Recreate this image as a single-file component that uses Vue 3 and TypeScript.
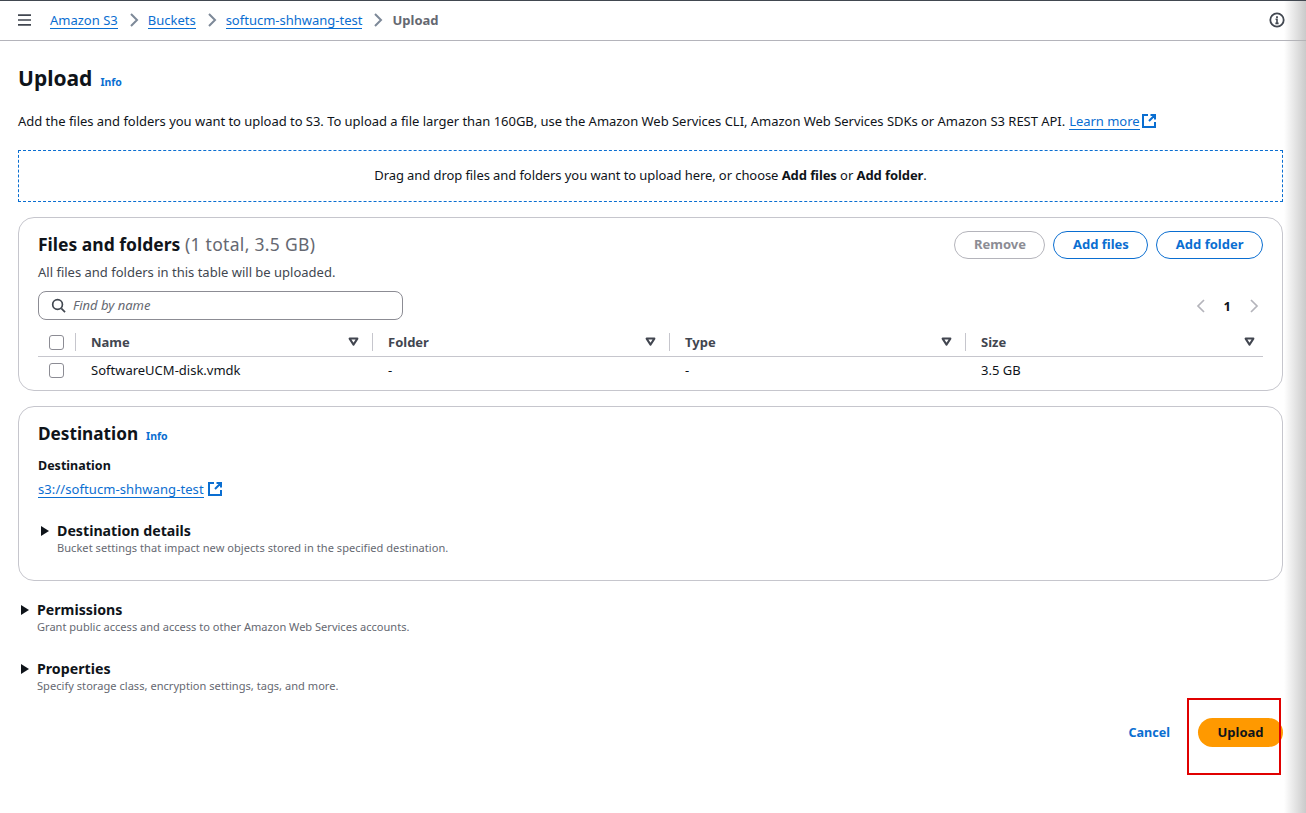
<script setup lang="ts">
interface Col { name: string; value: string }
const cols: Col[] = [
  { name: 'Name', value: 'SoftwareUCM-disk.vmdk' },
  { name: 'Folder', value: '-' },
  { name: 'Type', value: '-' },
  { name: 'Size', value: '3.5 GB' },
]
const crumbs = ['Amazon S3', 'Buckets', 'softucm-shhwang-test']
</script>

<template>
  <div class="page">
    <header class="topbar">
      <svg class="menu" width="15" height="16" viewBox="0 0 15 16"><path d="M1 3.2h13M1 8h13M1 12.8h13" stroke="#414750" stroke-width="1.7" fill="none" /></svg>
      <nav class="crumbs">
        <template v-for="c in crumbs" :key="c">
          <a class="crumb">{{ c }}</a>
          <svg class="sep" width="16" height="16" viewBox="0 0 16 16"><path d="M5 2l6 6-6 6" stroke="#7d8998" stroke-width="2" fill="none" /></svg>
        </template>
        <span class="current">Upload</span>
      </nav>
      <svg class="info-icon" width="16" height="16" viewBox="0 0 16 16"><circle cx="8" cy="8" r="6.7" stroke="#414750" stroke-width="1.8" fill="none" /><path d="M6.6 7.2H8v4.2M6.4 11.4h3.2" stroke="#414750" stroke-width="1.6" fill="none" /><path d="M8 4.2v1.8" stroke="#414750" stroke-width="1.8" /></svg>
    </header>

    <main class="main">
      <div class="title-row">
        <h1>Upload</h1><a class="info">Info</a>
      </div>
      <p class="desc">Add the files and folders you want to upload to S3. To upload a file larger than 160GB, use the Amazon Web Services CLI, Amazon Web Services SDKs or Amazon S3 REST API. <a class="link">Learn more</a>
        <svg class="ext" width="16" height="16" viewBox="0 0 16 16"><path d="M7 2H2v12h12V9M9.5 2H14v4.5M14 2L8 8" stroke="#0a6ed1" stroke-width="2" fill="none" /></svg>
      </p>

      <div class="drop"><span>Drag and drop files and folders you want to upload here, or choose <b>Add files</b> or <b>Add folder</b>.</span></div>

      <section class="card files">
        <div class="card-head">
          <div>
            <h2>Files and folders <span class="count">(1 total, 3.5 GB)</span></h2>
            <p class="sub">All files and folders in this table will be uploaded.</p>
          </div>
          <div class="btns">
            <button class="btn disabled">Remove</button>
            <button class="btn">Add files</button>
            <button class="btn">Add folder</button>
          </div>
        </div>
        <div class="tools">
          <div class="search">
            <svg width="15" height="15" viewBox="0 0 16 16"><circle cx="7" cy="7" r="5.2" stroke="#414750" stroke-width="1.8" fill="none" /><path d="M11 11l4 4" stroke="#414750" stroke-width="1.8" /></svg>
            <span>Find by name</span>
          </div>
          <div class="pager">
            <svg width="12" height="14" viewBox="0 0 12 14"><path d="M9 1L3 7l6 6" stroke="#b4b4bb" stroke-width="1.7" fill="none" /></svg>
            <b>1</b>
            <svg width="12" height="14" viewBox="0 0 12 14"><path d="M3 1l6 6-6 6" stroke="#b4b4bb" stroke-width="1.7" fill="none" /></svg>
          </div>
        </div>
        <div class="table">
          <div class="row head">
            <div class="check-cell"><i class="check"></i></div>
            <div v-for="c in cols" :key="c.name" class="th">
              <span>{{ c.name }}</span>
              <svg width="11" height="10" viewBox="0 0 11 10"><path d="M1.6 1.6h7.8L5.5 7.6z" stroke="#424650" stroke-width="2" fill="none" stroke-linejoin="round" /></svg>
            </div>
          </div>
          <div class="row body">
            <div class="check-cell"><i class="check"></i></div>
            <div v-for="c in cols" :key="c.name" class="td">{{ c.value }}</div>
          </div>
        </div>
      </section>

      <section class="card dest">
        <div class="dest-title"><h2>Destination</h2><a class="info">Info</a></div>
        <div class="label">Destination</div>
        <div class="dest-link"><a class="link">s3://softucm-shhwang-test</a>
          <svg class="ext" width="16" height="16" viewBox="0 0 16 16"><path d="M7 2H2v12h12V9M9.5 2H14v4.5M14 2L8 8" stroke="#0a6ed1" stroke-width="2" fill="none" /></svg>
        </div>
        <div class="expander inner">
          <i class="tri"></i>
          <div>
            <h3>Destination details</h3>
            <p>Bucket settings that impact new objects stored in the specified destination.</p>
          </div>
        </div>
      </section>

      <div class="expander perm">
        <i class="tri"></i>
        <div>
          <h3>Permissions</h3>
          <p>Grant public access and access to other Amazon Web Services accounts.</p>
        </div>
      </div>
      <div class="expander prop">
        <i class="tri"></i>
        <div>
          <h3>Properties</h3>
          <p>Specify storage class, encryption settings, tags, and more.</p>
        </div>
      </div>

      <div class="actions">
        <a class="cancel">Cancel</a>
        <button class="primary">Upload</button>
      </div>
    </main>

    <div class="edge"></div>
    <div class="redbox"></div>
  </div>
</template>

<style>
html, body { margin: 0; background: #fff; }
</style>

<style scoped>
.page {
  position: relative;
  width: 1306px;
  height: 813px;
  overflow: hidden;
  background: #fff;
  color: #0f141a;
  font-family: "Noto Sans", "Open Sans", sans-serif;
  font-size: 13px;
  box-sizing: border-box;
  border-top: 1px solid #414750;
}
h1, h2, h3, p { margin: 0; }
a { cursor: pointer; }
.topbar {
  box-sizing: content-box;
  border-bottom: 1px solid #b4b4bb;
  display: flex;
  align-items: center;
  padding: 0 21px 1px 17px;
  height: 38px;
}
.menu { flex: none; }
.crumbs { display: flex; align-items: center; margin-left: 18px; flex: 1; }
.crumb { color: #0a6ed1; border-bottom: 1px solid #0a6ed1; line-height: 16px; }
.sep { margin: 0 6px 0 8px; }
.current { color: #656871; font-weight: 700; }
.main { padding: 0 23px 0 18px; }
.title-row { display: flex; align-items: baseline; margin-top: 21px; height: 32px; }
h1 { font-size: 21px; line-height: 32px; font-weight: 700; }
.info { color: #0a6ed1; font-size: 10.5px; font-weight: 700; margin-left: 8px; }
.desc { margin-top: 17px; line-height: 20px; display: flex; align-items: center; gap: 1px; white-space: nowrap; height: 20px; letter-spacing: -0.03px; }
.desc .link { margin-left: 3px; }
.link { color: #0a6ed1; border-bottom: 1px solid #0a6ed1; line-height: 16px; }
.ext { flex: none; }
.drop {
  margin-top: 19px;
  height: 52px;
  box-sizing: border-box;
  border: 1px dashed #0a6ed1;
  display: flex;
  align-items: center;
  justify-content: center;
  padding-bottom: 2px;
  letter-spacing: -0.08px;
}
.card {
  border: 1px solid #c6c6cd;
  border-radius: 16px;
  box-sizing: border-box;
  padding: 0 19px;
}
.files { margin-top: 15px; height: 174px; }
.card-head { display: flex; justify-content: space-between; padding-top: 13px; height: 47px; box-sizing: content-box; }
h2 { font-size: 17.5px; line-height: 27px; font-weight: 700; }
.dest h2 { font-size: 17.2px; line-height: 28px; }
.count { font-weight: 400; color: #656871; letter-spacing: 0.3px; }
.sub { color: #414750; line-height: 18px; margin-top: 5px; }
.btns { display: flex; gap: 8px; align-items: flex-start; }
.btn {
  height: 28px;
  padding: 0 18.5px 2px;
  background: #fff;
  border: 1px solid #0a6ed1;
  border-radius: 14px;
  color: #0a6ed1;
  font: 700 13px "Noto Sans", sans-serif;
}
.btn.disabled { border-color: #b4b4bb; color: #8c8c94; }
.tools { display: flex; justify-content: space-between; align-items: center; margin-top: 13px; }
.search {
  width: 365px;
  height: 29px;
  box-sizing: border-box;
  border: 1px solid #8c8c94;
  border-radius: 8px;
  display: flex;
  align-items: center;
  gap: 7px;
  padding: 0 0 2px 12px;
  color: #656871;
  font-style: italic;
}
.search svg { position: relative; top: 1px; }
.pager { display: flex; align-items: center; gap: 17px; padding-right: 3px; }
.table { margin-top: 4px; }
.row { display: grid; grid-template-columns: 38px 297px 297px 296px 297px; }
.row.head { height: 28px; padding-top: 4px; border-bottom: 1px solid #c6c6cd; align-items: center; }
.row.body { height: 26px; padding-bottom: 1px; align-items: center; }
.check-cell { display: flex; align-items: center; height: 18px; padding-left: 11px; border-right: 1px solid #c6c6cd; box-sizing: border-box; }
.row.body .check-cell { border-right: none; }
.check { display: block; width: 13px; height: 13px; border: 1px solid #8c8c94; border-radius: 3px; box-sizing: content-box; }
.th {
  display: flex;
  justify-content: space-between;
  align-items: center;
  height: 18px;
  padding: 0 13px 0 15px;
  box-sizing: border-box;
  border-right: 1px solid #c6c6cd;
  font-weight: 700;
  color: #424650;
}
.th:last-child { border-right: none; padding-right: 8px; }
.td { padding-left: 15px; color: #0f141a; }
.dest { margin-top: 15px; height: 175px; padding-top: 13px; }
.dest-title { display: flex; align-items: baseline; }
.dest-title .info { margin-left: 8px; }
.label { font-weight: 700; margin-top: 9px; line-height: 18px; font-size: 12.5px; }
.dest-link { display: flex; align-items: center; gap: 3px; margin-top: 4px; height: 20px; }
.dest-link .link { letter-spacing: 0.08px; }
.expander { display: flex; align-items: flex-start; }
.expander h3 { font-size: 14.2px; line-height: 18px; font-weight: 700; }
.expander p { font-size: 11.05px; line-height: 16px; color: #656871; }
.inner p { letter-spacing: 0.04px; }
.prop p { letter-spacing: 0.03px; }
.tri { display: block; width: 0; height: 0; border-left: 8px solid #0f141a; border-top: 5px solid transparent; border-bottom: 5px solid transparent; margin-top: 4px; margin-right: 8px; }
.inner { margin-top: 23px; padding-left: 3px; }
.perm { margin-top: 20px; padding-left: 3px; }
.prop { margin-top: 25px; padding-left: 3px; }
.actions { display: flex; justify-content: flex-end; align-items: center; gap: 28px; margin-top: 24px; }
.cancel { color: #0a6ed1; font-weight: 700; font-size: 12.6px; }
.primary {
  width: 85px;
  height: 29px;
  padding: 0 0 2px;
  border: none;
  border-radius: 15px;
  background: #ff9900;
  color: #0f141a;
  font: 700 13px "Noto Sans", sans-serif;
}
.edge {
  position: absolute;
  top: 0;
  right: 0;
  bottom: 0;
  width: 22px;
  background: linear-gradient(to right, rgba(200,200,200,0), rgba(180,180,180,0.7));
  pointer-events: none;
}
.redbox {
  position: absolute;
  left: 1187px;
  top: 697px;
  width: 94px;
  height: 77px;
  box-sizing: border-box;
  border: 2px solid #e00000;
  pointer-events: none;
}
</style>
